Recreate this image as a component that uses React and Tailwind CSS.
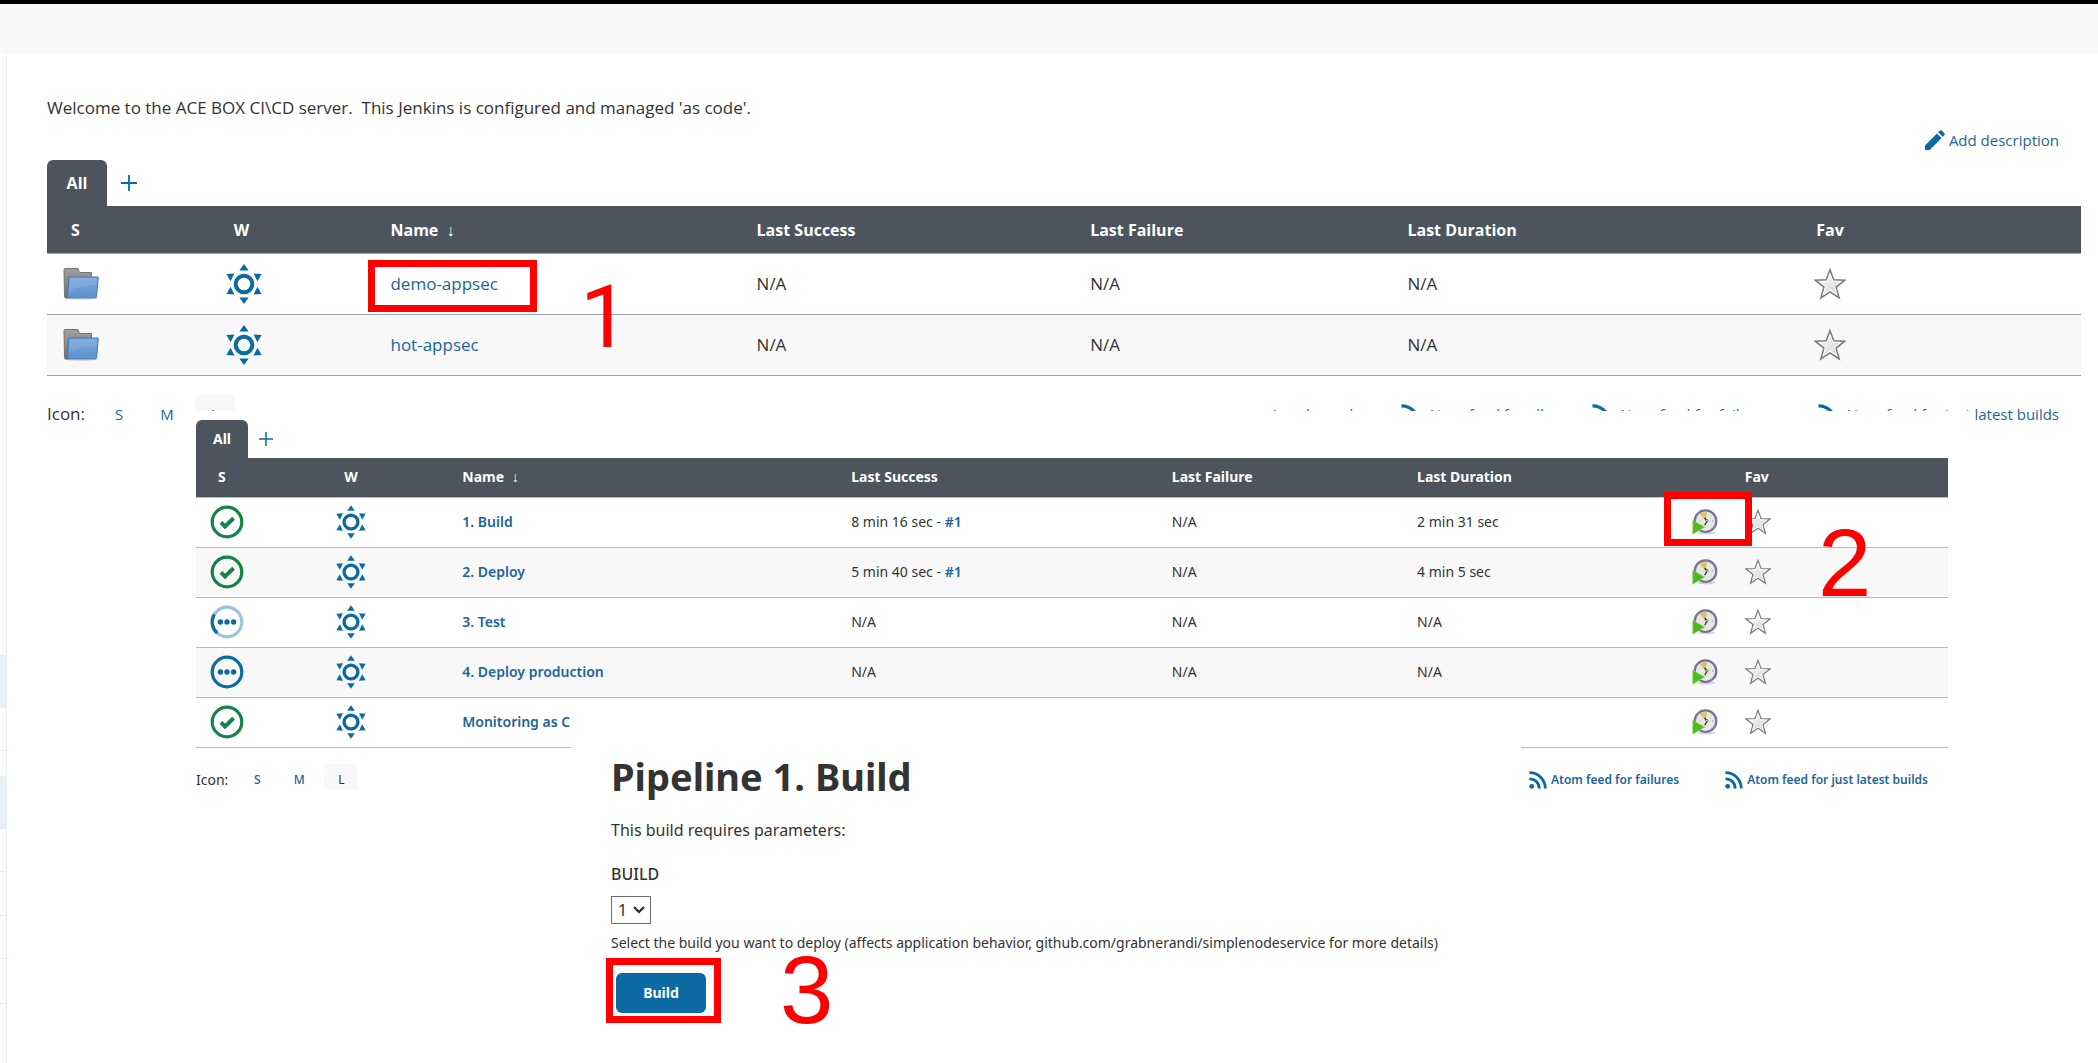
import React from "react";

const BLUE = "#0b6aa2";

function Sun({ className }) {
  return (
    <svg viewBox="0 0 36 40" className={className} aria-hidden="true">
      <circle cx="18" cy="20" r="8.3" fill="none" stroke={BLUE} strokeWidth="4" />
      <g fill={BLUE}>
        <path d="M18 0l4.6 6.6h-9.2z" />
        <path d="M18 40l4.6-6.6h-9.2z" />
        <path d="M0.4 10l8-.6-3.8 7.8z" />
        <path d="M35.6 10l-8-.6 3.8 7.8z" />
        <path d="M0.4 30l8 .6-3.8-7.8z" />
        <path d="M35.6 30l-8 .6 3.8-7.8z" />
      </g>
    </svg>
  );
}

function Folder() {
  return (
    <svg viewBox="0 0 36 32" className="h-8 w-9" aria-hidden="true">
      <defs>
        <linearGradient id="fg" x1="0" y1="0" x2="0" y2="1">
          <stop offset="0" stopColor="#a0a0a0" />
          <stop offset="1" stopColor="#6d6d6d" />
        </linearGradient>
        <linearGradient id="fb" x1="0" y1="0" x2="0" y2="1">
          <stop offset="0" stopColor="#7ba6d8" />
          <stop offset="1" stopColor="#5e94d0" />
        </linearGradient>
      </defs>
      <ellipse cx="18" cy="30.3" rx="17" ry="1.5" fill="#00000030" />
      <path d="M1 1.5Q1 .5 2 .5H15l1.5 4H28.5V20L4 30H3Q1.5 30 1.5 28z" fill="url(#fg)" stroke="#757575" />
      <path d="M5.8 9H35.3L33.6 28.5Q33.5 29.8 32 29.8H4.5Z" fill="url(#fb)" stroke="#4379b8" />
      <path d="M6.8 10H34l-.6 7Q20 17 6 23z" fill="#ffffff18" />
    </svg>
  );
}

function Star({ className }) {
  return (
    <svg viewBox="0 0 30 30" className={className} aria-hidden="true">
      <defs>
        <linearGradient id="sg" x1="0" y1="0" x2="1" y2="1">
          <stop offset="0" stopColor="#f6f6f6" />
          <stop offset="1" stopColor="#d6d6d6" />
        </linearGradient>
      </defs>
      <path
        d="M15 1.6l3.5 9.4 10.4.4-8.2 6.5 2.9 10.2L15 22.3l-8.6 5.8 2.9-10.2-8.2-6.5 10.4-.4z"
        fill="#fff"
        stroke="#7a7a7a"
        strokeWidth="1.4"
      />
      <path d="M15 6.5l2.3 6.4 6.8.4-5.3 4.2 1.8 6.6L15 20.2l-5.6 3.9 1.8-6.6-5.3-4.2 6.8-.4z" fill="url(#sg)" />
    </svg>
  );
}

function Rss({ className }) {
  return (
    <svg viewBox="0 0 18 18" className={className} fill="none" stroke={BLUE} strokeWidth="2.8" aria-hidden="true">
      <circle cx="2.7" cy="15.3" r="2.4" fill={BLUE} stroke="none" />
      <path d="M.4 7.8A9.6 9.6 0 0 1 10.2 17.6" />
      <path d="M.4 1.7A15.8 15.8 0 0 1 16.3 17.6" />
    </svg>
  );
}

function Clock() {
  return (
    <svg viewBox="0 0 26 26" className="h-[26px] w-[26px]" aria-hidden="true">
      <ellipse cx="14.5" cy="23.8" rx="9" ry="1.6" fill="#00000028" />
      <circle cx="13.5" cy="12.2" r="10.8" fill="#e6e6e3" stroke="#75739a" strokeWidth="2.2" />
      <path d="M13.5 12L7.8 4.8Q11 2.8 15 3.6z" fill="#e2bf5a" />
      <path d="M12.6 9l2.6 2.7-2.4 4.4" fill="none" stroke="#333" strokeWidth="1.3" />
      <circle cx="15" cy="11.7" r="1.1" fill="#fff" stroke="#444" strokeWidth=".7" />
      <circle cx="20.8" cy="12" r=".7" fill="#999" />
      <path d="M.8 11.4L12.6 18 .8 25.2z" fill="#4fb81c" stroke="#8fce6e" strokeWidth=".8" />
    </svg>
  );
}

function Status({ kind }) {
  const green = "#138347";
  return (
    <svg viewBox="0 0 34 34" className="h-[34px] w-[34px]" fill="none" aria-hidden="true">
      {kind === "ok" && (
        <>
          <circle cx="17" cy="17" r="14.8" stroke={green} strokeWidth="3.2" />
          <path d="M11 17.4l4 4 8.6-8.2" stroke={green} strokeWidth="4" />
        </>
      )}
      {kind !== "ok" && (
        <>
          <circle cx="17" cy="17" r="14.8" stroke={kind === "wait" ? BLUE : "#9dc3da"} strokeWidth="3.2" />
          {kind === "run" && <path d="M7.2 28.1A14.8 14.8 0 0 1 4.3 9.4" stroke={BLUE} strokeWidth="3.2" />}
          <g fill={BLUE}>
            <circle cx="10.4" cy="17" r="2.7" />
            <circle cx="17" cy="17" r="2.7" />
            <circle cx="23.6" cy="17" r="2.7" />
          </g>
        </>
      )}
    </svg>
  );
}

function Pencil() {
  return (
    <svg viewBox="0 0 20 20" className="h-5 w-5" fill={BLUE} aria-hidden="true">
      <path d="M0 20v-4.6L12 3.4 16.6 8 4.6 20z" />
      <path d="M13.2 2.2L14.6.8q1.2-1.2 2.4 0L19.2 3q1.2 1.2 0 2.4L17.8 6.8z" />
    </svg>
  );
}

const jobs = ["demo-appsec", "hot-appsec"];

const pipelines = [
  { kind: "ok", name: "1. Build", success: "8 min 16 sec - ", run: "#1", failure: "N/A", duration: "2 min 31 sec" },
  { kind: "ok", name: "2. Deploy", success: "5 min 40 sec - ", run: "#1", failure: "N/A", duration: "4 min 5 sec" },
  { kind: "run", name: "3. Test", success: "N/A", failure: "N/A", duration: "N/A" },
  { kind: "wait", name: "4. Deploy production", success: "N/A", failure: "N/A", duration: "N/A" },
  { kind: "ok", name: "Monitoring as Code", success: "N/A", failure: "N/A", duration: "N/A" },
];

function JobsTable() {
  return (
    <table className="w-full table-fixed border-collapse text-left text-[17px] leading-6">
      <colgroup>
        <col className="w-[8%]" />
        <col className="w-[8.1%]" />
        <col className="w-[18%]" />
        <col className="w-[16.4%]" />
        <col className="w-[15.6%]" />
        <col className="w-[20.1%]" />
        <col />
      </colgroup>
      <thead className="bg-[#4d545d] text-base text-white">
        <tr className="h-[47px] border-b border-[#98a5b1]">
          <th className="pt-0.5 pl-6">S</th>
          <th className="pt-0.5 pl-6">W</th>
          <th className="pt-0.5 pl-4">Name <span className="ml-1 font-normal">↓</span></th>
          <th className="pt-0.5 pl-4">Last Success</th>
          <th className="pt-0.5 pl-4">Last Failure</th>
          <th className="pt-0.5 pl-4">Last Duration</th>
          <th className="pt-0.5 pl-4">Fav</th>
        </tr>
      </thead>
      <tbody>
        {jobs.map((name) => (
          <tr key={name} className="h-[61px] border-b border-[#98a5b1] even:bg-[#f8f8f8]">
            <td className="pl-4"><Folder /></td>
            <td className="pl-4"><Sun className="h-10 w-9" /></td>
            <td className="pl-4"><a href="#job" className="font-medium text-[#1b659b]">{name}</a></td>
            <td className="pl-4">N/A</td>
            <td className="pl-4">N/A</td>
            <td className="pl-4">N/A</td>
            <td className="pl-3.5">
              <button aria-label={"Favourite " + name} className="block"><Star className="h-8 w-8" /></button>
            </td>
          </tr>
        ))}
      </tbody>
    </table>
  );
}

function PipelinesTable() {
  return (
    <table className="w-full table-fixed border-collapse text-left text-sm leading-5">
      <colgroup>
        <col className="w-[7.2%]" />
        <col className="w-[7.2%]" />
        <col className="w-[22.2%]" />
        <col className="w-[18.3%]" />
        <col className="w-[14%]" />
        <col className="w-[15.7%]" />
        <col className="w-[3%]" />
        <col />
      </colgroup>
      <thead className="bg-[#4d545d] text-white">
        <tr className="h-[39px] border-b border-[#b1bbc4]">
          <th className="pl-[22px]">S</th>
          <th className="pl-[22px]">W</th>
          <th className="pl-3.5">Name <span className="ml-1 font-normal">↓</span></th>
          <th className="pl-3.5">Last Success</th>
          <th className="pl-3.5">Last Failure</th>
          <th className="pl-3.5">Last Duration</th>
          <th />
          <th className="pl-3.5">Fav</th>
        </tr>
      </thead>
      <tbody>
        {pipelines.map((p) => (
          <tr key={p.name} className="h-[50px] border-b border-[#b1bbc4] even:bg-[#f8f8f8]">
            <td className="pl-3.5"><Status kind={p.kind} /></td>
            <td className="pl-3.5"><Sun className="h-[34px] w-[30px]" /></td>
            <td className="pl-3.5"><a href="#pipeline" className="font-semibold text-[#1b659b]">{p.name}</a></td>
            <td className="pl-3.5">
              {p.success}
              {p.run && <a href="#run" className="font-semibold text-[#1b659b]">{p.run}</a>}
            </td>
            <td className="pl-3.5">{p.failure}</td>
            <td className="pl-3.5">{p.duration}</td>
            <td className="pl-3.5">
              <button aria-label={"Schedule " + p.name} className="block"><Clock /></button>
            </td>
            <td className="pl-3.5">
              <button aria-label={"Favourite " + p.name} className="block"><Star className="h-[26px] w-[26px]" /></button>
            </td>
          </tr>
        ))}
      </tbody>
    </table>
  );
}

export default function App() {
  return (
    <div className="relative flex min-h-screen flex-col overflow-hidden bg-white font-['Open_Sans','Noto_Sans',sans-serif] text-[#333]">
      <header className="h-[54px] border-t-4 border-black bg-[#f8f8f8]" />
      <div className="flex flex-1">
        <nav className="w-[7px] shrink-0 border-r border-[#e9eef2] pt-[601px]">
          <div className="h-[53px] bg-[#e9eef2]" />
          <div className="h-[43px] border-b border-[#e9eef2]" />
          <div className="h-[25px]" />
          <div className="h-[53px] bg-[#e9eef2]" />
          <div className="h-[43px] border-b border-[#e9eef2]" />
          <div className="h-[44px] border-b border-[#e9eef2]" />
          <div className="h-[43px] border-b border-[#e9eef2]" />
          <div className="h-[45px] border-b border-[#e9eef2]" />
        </nav>
        <main className="min-w-0 flex-1 pt-10 pr-[17px] pl-10">
          <p className="text-[17px] leading-7 whitespace-pre">Welcome to the ACE BOX CI\CD server.  This Jenkins is configured and managed 'as code'.</p>
          <div className="mt-1.5 flex justify-end pr-[22px]">
            <a href="#describe" className="flex items-center gap-1 text-[15px] leading-6 font-medium text-[#1b659b]">
              <Pencil />
              Add description
            </a>
          </div>
          <div className="mt-2 flex">
            <a href="#all" className="flex h-[46px] w-[60px] items-center justify-center rounded-t-md bg-[#4d545d] text-base font-bold text-white">All</a>
            <a href="#new" aria-label="New view" className="flex w-11 items-center justify-center">
              <svg viewBox="0 0 16 16" className="h-4 w-4" stroke={BLUE} strokeWidth="1.8"><path d="M8 0v16M0 8h16" /></svg>
            </a>
          </div>
          <JobsTable />
          <div className="flex items-center pt-[18px] pr-[22px] text-[15px] leading-10 text-[#1b659b]">
            <span className="mr-2.5 text-[17px] text-[#333]">Icon:</span>
            <a href="#s" className="w-12 text-center font-medium">S</a>
            <a href="#m" className="w-12 text-center font-medium">M</a>
            <span className="ml-1 w-10 rounded-md bg-[#f8f8f8] text-center text-[#333]">L</span>
            <div className="ml-auto flex font-medium">
              <a href="#legend" className="mr-12">Icon legend</a>
              <a href="#feed" className="mr-12 flex items-center gap-1.5"><Rss className="h-5 w-5" />Atom feed for all</a>
              <a href="#failures" className="mr-12 flex items-center gap-1.5"><Rss className="h-5 w-5" />Atom feed for failures</a>
              <a href="#latest" className="flex items-center gap-1.5"><Rss className="h-5 w-5" />Atom feed for just latest builds</a>
            </div>
          </div>
        </main>
      </div>

      <section className="absolute top-[411px] right-[126px] left-[181px] overflow-hidden bg-white pt-[9px] pr-6 pl-[15px] font-['Noto_Sans','Open_Sans',sans-serif]">
        <div className="flex">
          <a href="#all-pipelines" className="flex h-[38px] w-[52px] items-center justify-center rounded-t-md bg-[#4d545d] text-sm font-bold text-white">All</a>
          <a href="#new-pipeline-view" aria-label="New view" className="flex w-9 items-center justify-center">
            <svg viewBox="0 0 14 14" className="h-3.5 w-3.5" stroke={BLUE} strokeWidth="1.5"><path d="M7 0v14M0 7h14" /></svg>
          </a>
        </div>
        <PipelinesTable />
        <div className="flex h-[42px] items-start pt-4 pr-5 text-xs leading-8 text-[#1b659b]">
          <span className="mr-2 text-sm leading-8 text-[#333]">Icon:</span>
          <a href="#s2" className="w-[42px] text-center font-medium">S</a>
          <a href="#m2" className="w-[42px] text-center font-medium">M</a>
          <span className="ml-1 w-[34px] rounded-t-md bg-[#f8f8f8] text-center text-[#333]">L</span>
          <div className="ml-auto flex gap-[46px] font-semibold">
            <a href="#failures2" className="flex items-center gap-1"><Rss className="h-[18px] w-[18px]" />Atom feed for failures</a>
            <a href="#latest2" className="flex items-center gap-1"><Rss className="h-[18px] w-[18px]" />Atom feed for just latest builds</a>
          </div>
        </div>
      </section>

      <form className="absolute top-[700px] right-[577px] bottom-0 left-[571px] bg-white pt-[46px] pl-10 font-['Noto_Sans','Open_Sans',sans-serif]" onSubmit={(e) => e.preventDefault()}>
        <h1 className="text-[38px] leading-[60px] font-bold">Pipeline 1. Build</h1>
        <p className="mt-2.5 text-base leading-7">This build requires parameters:</p>
        <label htmlFor="build" className="mt-[18px] block text-base leading-6 font-medium">BUILD</label>
        <div className="relative mt-2.5 w-10">
          <select id="build" className="block h-7 w-full appearance-none border border-[#6b6b6b] bg-white pl-1.5 text-base leading-6">
            <option>1</option>
          </select>
          <svg viewBox="0 0 12 8" className="pointer-events-none absolute top-2.5 right-1.5 h-2 w-3" fill="none" stroke="#222" strokeWidth="2"><path d="M1 1l5 5 5-5" /></svg>
        </div>
        <p className="mt-[7px] text-sm leading-6 whitespace-nowrap">Select the build you want to deploy (affects application behavior, github.com/grabnerandi/simplenodeservice for more details)</p>
        <button className="mt-[18px] ml-[5px] block h-10 w-[90px] rounded-md bg-[#0b6aa2] text-sm font-bold text-white">Build</button>
      </form>

      <div className="pointer-events-none absolute top-[260px] left-[368px] h-[52px] w-[169px] border-[7px] border-[#f00]" />
      <div className="pointer-events-none absolute top-[492px] left-[1664px] h-[54px] w-[88px] border-[7px] border-[#f00]" />
      <div className="pointer-events-none absolute top-[958px] left-[606px] h-[65px] w-[115px] border-[7px] border-[#f00]" />
      <span className="absolute top-[273px] left-[580px] font-['Roboto',sans-serif] text-[88px] leading-none text-[#f00]">1</span>
      <span className="absolute top-[515px] left-[1818px] font-['Liberation_Sans',sans-serif] text-[96px] leading-none text-[#f00]">2</span>
      <span className="absolute top-[942px] left-[780px] font-['Liberation_Sans',sans-serif] text-[96px] leading-none text-[#f00]">3</span>
    </div>
  );
}
